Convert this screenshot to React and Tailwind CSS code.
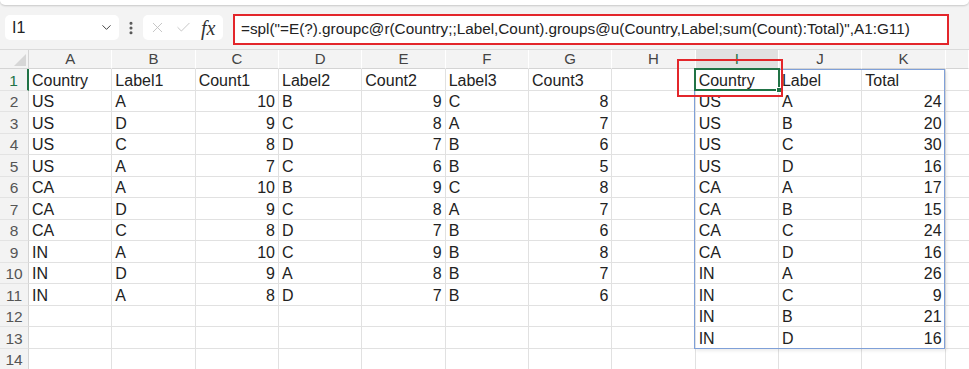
import React from "react";
import { ChevronDown, EllipsisVertical, X, Check } from "lucide-react";

const letters = ["A", "B", "C", "D", "E", "F", "G", "H", "I", "J", "K", ""];

const data = [
  ["Country", "Label1", "Count1", "Label2", "Count2", "Label3", "Count3", "", "Country", "Label", "Total"],
  ["US", "A", 10, "B", 9, "C", 8, "", "US", "A", 24],
  ["US", "D", 9, "C", 8, "A", 7, "", "US", "B", 20],
  ["US", "C", 8, "D", 7, "B", 6, "", "US", "C", 30],
  ["US", "A", 7, "C", 6, "B", 5, "", "US", "D", 16],
  ["CA", "A", 10, "B", 9, "C", 8, "", "CA", "A", 17],
  ["CA", "D", 9, "C", 8, "A", 7, "", "CA", "B", 15],
  ["CA", "C", 8, "D", 7, "B", 6, "", "CA", "C", 24],
  ["IN", "A", 10, "C", 9, "B", 8, "", "CA", "D", 16],
  ["IN", "D", 9, "A", 8, "B", 7, "", "IN", "A", 26],
  ["IN", "A", 8, "D", 7, "B", 6, "", "IN", "C", 9],
  ["", "", "", "", "", "", "", "", "IN", "B", 21],
  ["", "", "", "", "", "", "", "", "IN", "D", 16],
  ["", "", "", "", "", "", "", "", "", "", ""],
];

const formula =
  '=spl("=E(?).groupc@r(Country;;Label,Count).groups@u(Country,Label;sum(Count):Total)",A1:G11)';

export default function App() {
  return (
    <div
      className="w-[969px] h-[369px] overflow-hidden bg-white text-[#222]"
      style={{ fontFamily: '"Liberation Sans", Arial, sans-serif' }}
    >
      {/* ribbon edge + formula bar */}
      <div className="bg-[#f3f3f3] h-[50px] border-b border-[#dadada]">
        <div className="h-[5px] bg-white rounded-b-[6px] shadow-[0_1px_2px_rgba(0,0,0,0.18)]" />
        <div className="flex items-start pl-[5px]">
          {/* name box */}
          <div className="mt-[10px] w-[114px] h-[25px] bg-white rounded-[5px] flex items-center justify-between pl-[7px] pr-[5px]">
            <span className="text-[16px] leading-none">I1</span>
            <ChevronDown size={15} strokeWidth={1.6} className="text-[#444]" />
          </div>
          <div className="w-[24px] h-[25px] mt-[10px] flex items-center justify-center">
            <EllipsisVertical size={16} strokeWidth={2.6} className="text-[#555]" />
          </div>
          {/* cancel / enter / fx */}
          <div className="mt-[10px] w-[80px] h-[25px] bg-white rounded-[5px] flex items-center pl-[6px]">
            <X size={17} strokeWidth={1.2} className="text-[#bdbdbd]" />
            <Check size={17} strokeWidth={1.2} className="text-[#bdbdbd] ml-[9px]" />
            <span
              className="ml-[9px] text-[20px] italic leading-none text-[#333]"
              style={{ fontFamily: '"Liberation Serif", "Times New Roman", serif' }}
            >
              fx
            </span>
          </div>
          {/* formula */}
          <div className="ml-[10px] mt-[9px] w-[716px] h-[31px] bg-white border-2 border-[#e3262b] flex items-center pl-[6px]">
            <span className="text-[15.3px] whitespace-nowrap">{formula}</span>
          </div>
        </div>
      </div>

      {/* sheet */}
      <div className="relative">
        <div className="grid grid-cols-[29px_repeat(11,83.333px)_1fr] grid-rows-[19px_repeat(14,21.5px)]">
          {/* column headers */}
          <div className="bg-[#f3f3f3] border-r border-b border-[#d4d4d4] relative overflow-hidden">
            <div className="absolute right-[2px] bottom-[2px] w-0 h-0 border-l-[12px] border-l-transparent border-b-[12px] border-b-[#d6d6d6]" />
          </div>
          {letters.map((l, i) => (
            <div
              key={l + i}
              className={
                "flex items-center justify-center text-[15px] border-b border-[#d4d4d4] border-r " +
                (l === "I"
                  ? "bg-[#e1e1e1] text-[#217346] border-r-[#ffffff]"
                  : "bg-[#f3f3f3] text-[#444] border-r-[#ffffff]")
              }
            >
              {l}
            </div>
          ))}

          {data.map((row, r) => (
            <React.Fragment key={r}>
              <div
                className={
                  "bg-[#f3f3f3] flex items-end justify-center text-[15.5px] leading-[19px] border-b border-b-[#e3e3e3] " +
                  (r === 0
                    ? "text-[#217346] border-r-2 border-r-[#217346]"
                    : "text-[#555] border-r border-r-[#d4d4d4]")
                }
              >
                {r + 1}
              </div>
              {row.map((v, c) => (
                <div
                  key={c}
                  className={
                    "flex items-end px-[3px] text-[16px] leading-[18px] whitespace-nowrap overflow-visible border-r border-b border-[#e1e1e1] " +
                    (typeof v === "number" ? "justify-end" : "justify-start")
                  }
                >
                  {v}
                </div>
              ))}
              <div className="border-b border-[#e1e1e1]" />
            </React.Fragment>
          ))}
        </div>

        {/* result range outline */}
        <div className="absolute left-[694px] top-[19px] w-[251px] h-[280px] border-[1.5px] border-[#7fa0d8] shadow-[2px_2px_3px_rgba(0,0,0,0.08)] pointer-events-none" />
        {/* active cell */}
        <div className="absolute left-[694px] top-[18px] w-[86px] h-[23px] border-2 border-[#217346] pointer-events-none">
          <div className="absolute -right-[4px] -bottom-[4px] w-[6px] h-[6px] bg-[#217346] border border-white" />
        </div>
        {/* annotation */}
        <div className="absolute left-[677px] top-[9px] w-[106px] h-[38px] border-2 border-[#e3262b] pointer-events-none" />
      </div>
    </div>
  );
}
